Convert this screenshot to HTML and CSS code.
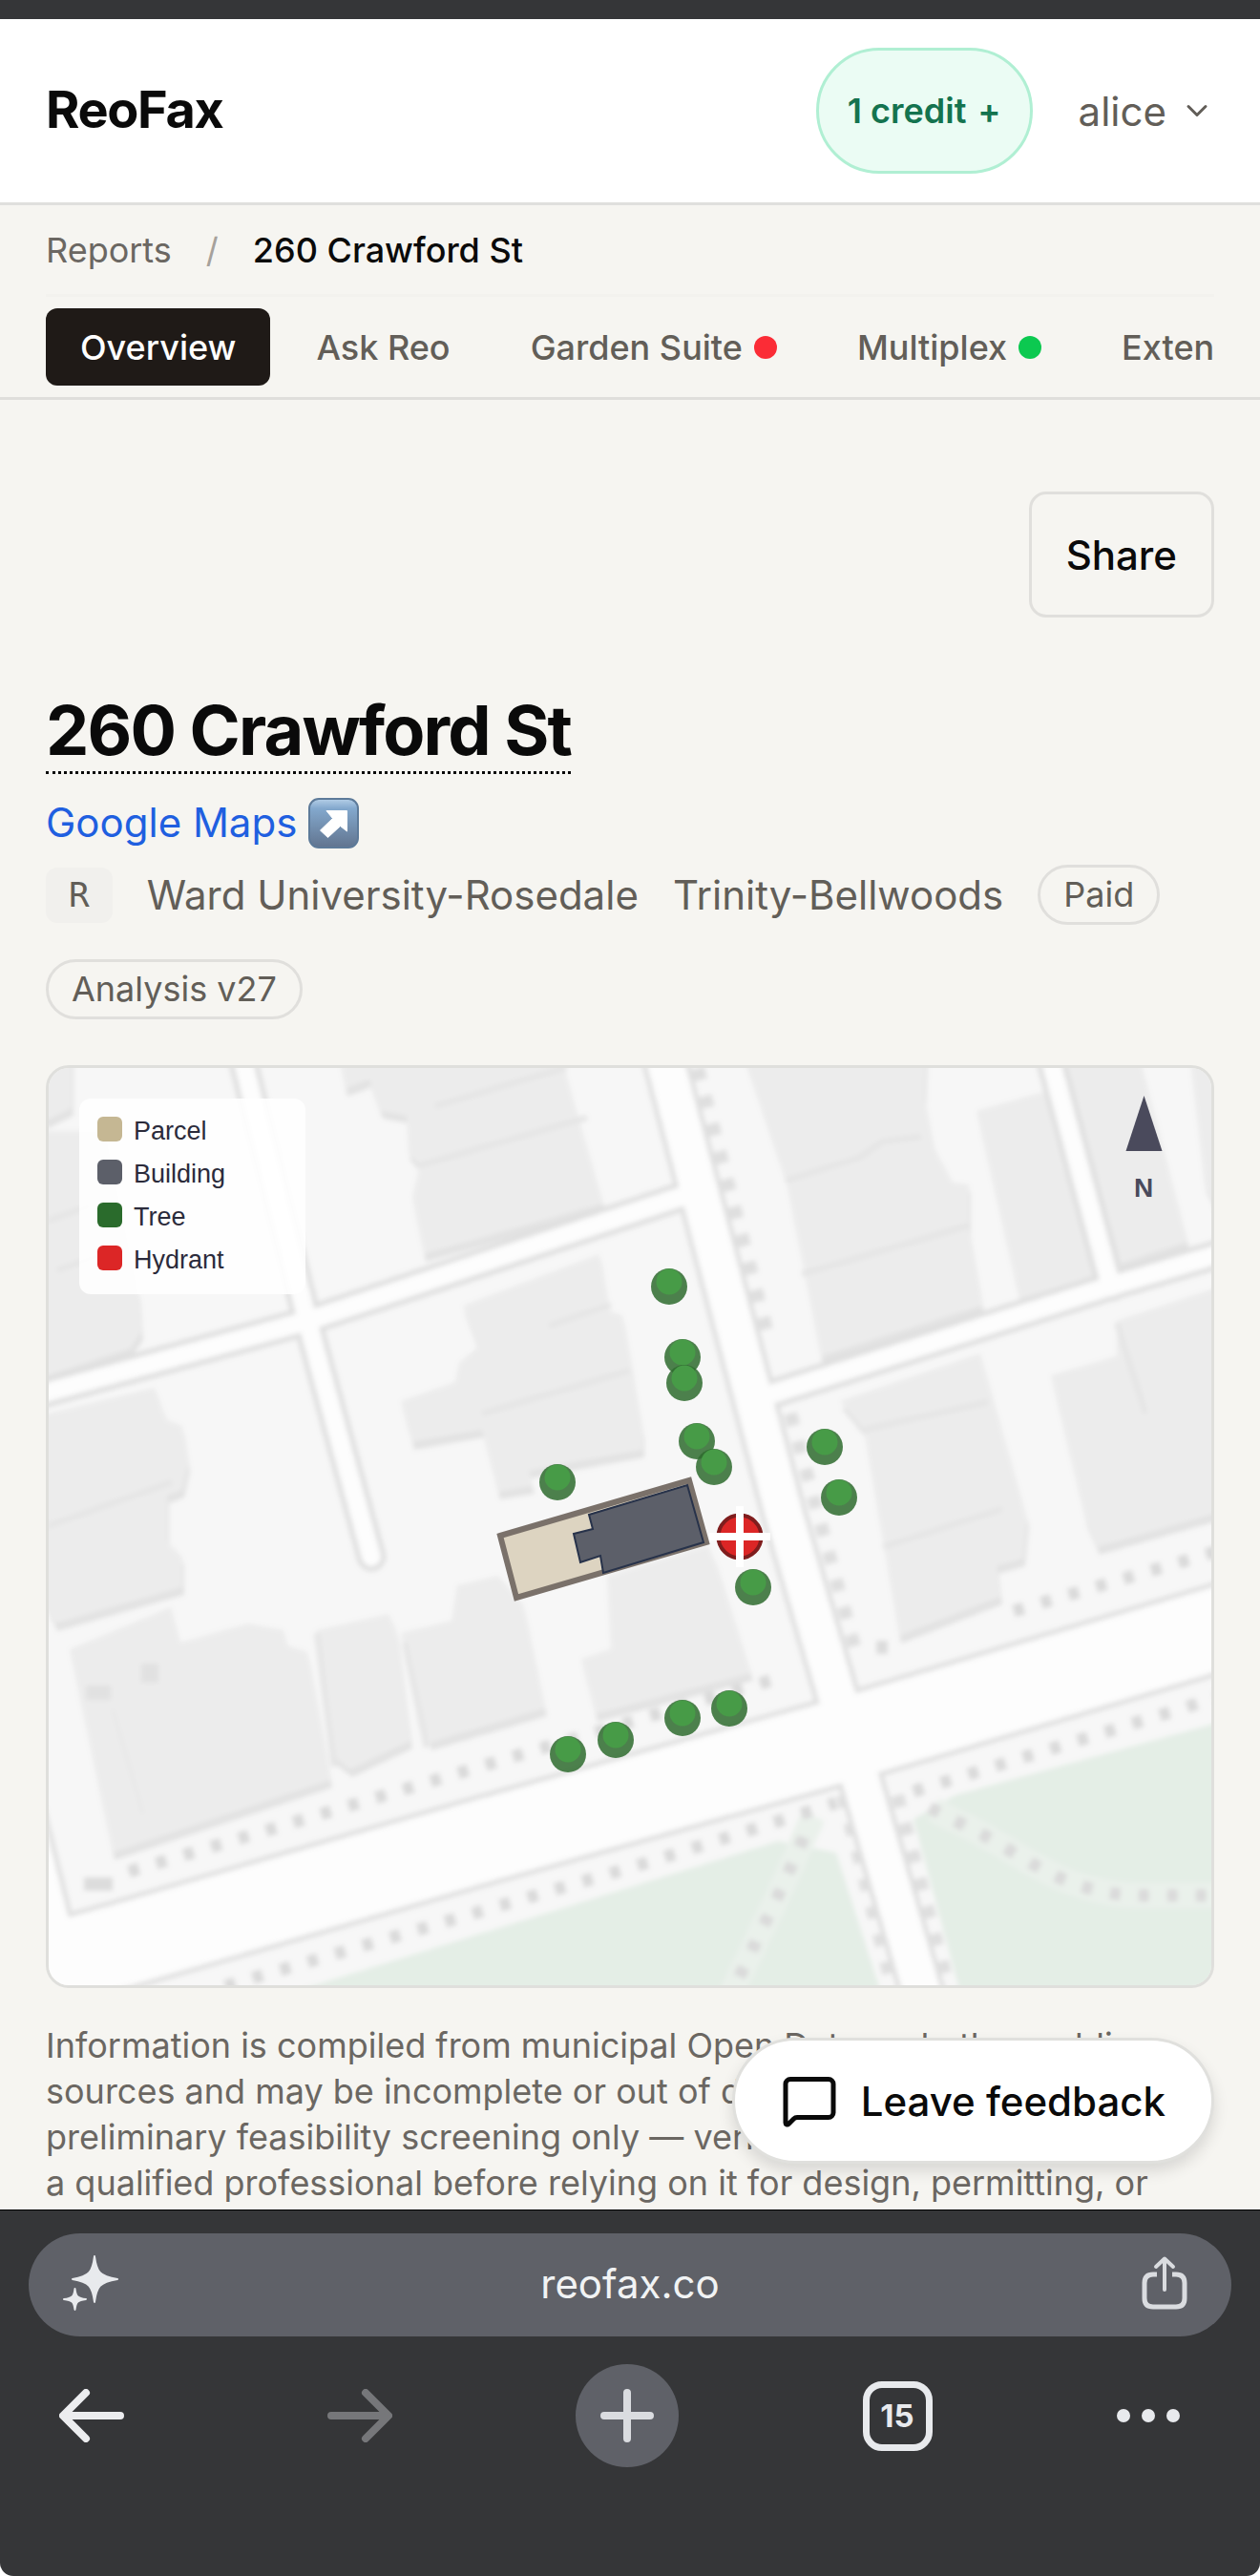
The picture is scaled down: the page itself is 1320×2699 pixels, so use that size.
FILE: index.html
```html
<!DOCTYPE html>
<html lang="en">
<head>
    <meta charset="UTF-8">
    <meta name="viewport" content="width=device-width, initial-scale=1.0">
    <title>260 Crawford St - ReoFax</title>
    <link rel="stylesheet" href="styles.css">
</head>
<body>
    <div class="status-strip"></div>

    <div class="page">
        <header class="site-header">
            <a href="#" class="logo">ReoFax</a>
            <div class="header-actions">
                <a href="#" class="credit-pill"><span>1 credit</span> <span>+</span></a>
                <button type="button" class="user-btn">
                    alice
                    <svg class="chevron" viewBox="0 0 24 24" fill="none" stroke="currentColor" stroke-width="2" stroke-linecap="round" stroke-linejoin="round"><path d="m6 9 6 6 6-6"/></svg>
                </button>
            </div>
        </header>

        <div class="subnav">
            <nav class="breadcrumb">
                <a href="#">Reports</a>
                <span class="slash">/</span>
                <span class="current">260 Crawford St</span>
            </nav>
            <nav class="tabs">
                <a href="#" class="tab active">Overview</a>
                <a href="#" class="tab">Ask Reo</a>
                <a href="#" class="tab">Garden Suite <span class="dot red"></span></a>
                <a href="#" class="tab">Multiplex <span class="dot green"></span></a>
                <a href="#" class="tab">Extension</a>
            </nav>
        </div>

        <main class="content">
            <div class="toolbar">
                <button type="button" class="share-btn">Share</button>
            </div>

            <h1><span>260 Crawford St</span></h1>

            <a href="#" class="maps-link">
                Google Maps
                <svg class="arrow-emoji" viewBox="0 0 53 53">
                    <defs>
                        <linearGradient id="tile" x1="0" y1="0" x2="0" y2="1">
                            <stop offset="0" stop-color="#b5cfe8"/>
                            <stop offset="0.2" stop-color="#83a8cd"/>
                            <stop offset="1" stop-color="#61748f"/>
                        </linearGradient>
                    </defs>
                    <rect x="1" y="1" width="51" height="51" rx="10" fill="url(#tile)" stroke="#5d7a99" stroke-width="2"/>
                    <path d="M19 13.500H40.500V35L33.500 29.500L20.500 41.500L12.500 34L25.500 21.500Z" fill="#fff" stroke="#fff" stroke-linejoin="round"/>
                </svg>
            </a>

            <div class="meta">
                <span class="zone">R</span>
                <span>Ward University-Rosedale</span>
                <span>Trinity-Bellwoods</span>
                <span class="pill">Paid</span>
                <span class="pill">Analysis v27</span>
            </div>

            <div class="map-card">
                <svg class="map" viewBox="51 1118 1218 961" role="img" aria-label="Site map">
                    <defs>
                        <filter id="soft" x="-5%" y="-5%" width="110%" height="110%"><feGaussianBlur stdDeviation="2.600"/></filter>
                        <g id="houses">
                            <path d="M354 1100H591V1118L632 1260L444 1313L432 1253L440 1220L428 1207L426 1168L399 1163L387 1130L362 1140Z"/>
                            <path d="M485 1367L628 1313L638 1373L652 1377L673 1500V1518L554 1540L558 1556L522 1562L505 1497L432 1510L420 1467L477 1447L481 1427L501 1410Z"/>
                            <path d="M30 1100H75V1160L51 1172H30Z"/>
                            <path d="M30 1184H110L145 1355L148 1395L136 1412L30 1447Z"/>
                            <path d="M30 1485L162 1453L175 1487L191 1493L197 1533L191 1560L175 1566L175 1615L191 1630V1662L58 1700L30 1640Z"/>
                            <path d="M73 1727L179 1683L189 1720L260 1700L297 1707L301 1723L322 1730L346 1864L118 1940Z"/>
                            <path d="M332 1707L407 1690L415 1707L430 1823L367 1853L350 1840Z"/>
                            <path d="M420 1710L473 1697L479 1660L522 1650L548 1680L571 1789L450 1825Z"/>
                            <path d="M636 1650L742 1618L754 1647L787 1752L624 1795L609 1737L640 1727Z"/>
                            <path d="M778 1100H970L968 1150L978 1200L998 1238L1015 1240V1287L1029 1367L860 1420L823 1233Z"/>
                            <path d="M1023 1163L1093 1143L1146 1340L1068 1360Z"/>
                            <path d="M1112 1100H1192L1244 1300L1174 1323Z"/>
                            <path d="M1246 1100H1290V1300L1262 1240Z"/>
                            <path d="M880 1467L1027 1417L1076 1590L1072 1632L1044 1640L1048 1672L942 1713L905 1497Z"/>
                            <path d="M1101 1440L1170 1420V1383L1290 1343V1580L1150 1620L1137 1590Z"/>
                        </g>
                        <g id="streets">
                            <path d="M-10 1475L52 1457L322 1383L713 1253"/>
                            <path d="M252 1100L322 1383L389 1630"/>
                            <path d="M807 1460L1162 1347L1290 1309"/>
                            <path d="M1098 1100L1164 1347"/>
                        </g>
                        <path id="crawford" d="M694 1100L822 1588L878 1780L902 1865L970 2100"/>
                        <path id="dundas" d="M-20 2078L128 2037L501 1929L880 1823L1290 1701"/>
                        <path id="side" d="M22 1900L62 2060"/>
                        <g id="tree">
                            <circle r="19" fill="#2e6b2e" fill-opacity=".85"/>
                            <circle cy="-5" r="13.500" fill="#479b47"/>
                        </g>
                    </defs>

                    <g filter="url(#soft)">
                        <path d="M0 1080H1320V2120H0Z" fill="#f7f7f7"/>

                        <!-- park -->
                        <path d="M310 2085L680 1970L815 1928L876 1940L921 2080V2110H310Z" fill="#e4eee6"/>
                        <path d="M957 1905L1000 1880L1290 1800V2110H1012Z" fill="#e4eee6"/>

                        <!-- houses and their shaded sides -->
                        <use href="#houses" x="2" y="8" fill="#e2e2e2"/>
                        <use href="#houses" fill="#ececec"/>
                        <g fill="none" stroke="#e5e5e5" stroke-width="6">
                            <path d="M456 1158L591 1118M440 1220L615 1170M575 1388L640 1366M505 1480L660 1435M50 1278L96 1262M60 1330L110 1312M50 1598L180 1552"/>
                            <path d="M823 1236L900 1212L925 1195L965 1190M840 1334L1015 1283M905 1497L1035 1468M925 1620L1050 1580M332 1710L350 1850M424 1720L447 1830M1170 1385L1200 1480"/>
                        </g>
                        <path d="M118 1790L150 1900" fill="none" stroke="#e9e9e9" stroke-width="5"/>
                        <path d="M90 1765H116V1780H90ZM148 1742H166V1762H148Z" fill="#e1e1e1"/>

                        <!-- footpaths -->
                        <g fill="none" stroke="#eaf1eb" stroke-width="26">
                            <path d="M978 1895L1031 1922L1082 1952Q1138 1985 1195 1985H1290"/>
                            <path d="M852 1902L819 1977L765 2090"/>
                        </g>
                        <g fill="none" stroke="#dadada" stroke-width="13" stroke-dasharray="11 19">
                            <path d="M135 1960L560 1833L813 1758"/>
                            <path d="M236 2080L680 1950L876 1888"/>
                            <path d="M1062 1687L1290 1620"/>
                            <path d="M957 1876L1290 1773"/>
                            <path d="M974 1893L1031 1922L1082 1952Q1138 1985 1195 1985H1290"/>
                            <path d="M842 1924L819 1977L765 2090"/>
                        </g>
                        <g fill="none" stroke="#dfdfdf" stroke-width="14" stroke-dasharray="13 17">
                            <path d="M731 1118L807 1407"/>
                            <path d="M828 1480L896 1727"/>
                            <path d="M940 1880L999 2100"/>
                            <path d="M883 1880L940 2100"/>
                        </g>
                        <path d="M88 1966H118V1980H88ZM918 1718H930V1732H918Z" fill="#dcdcdc"/>

                        <!-- road casings, then road fills -->
                        <g fill="none" stroke="#dfdfdf">
                            <use href="#streets" stroke-width="31" stroke-linecap="round"/>
                            <use href="#crawford" stroke-width="49"/>
                            <use href="#side" stroke-width="54"/>
                            <use href="#dundas" stroke-width="96"/>
                        </g>
                        <g fill="none" stroke="#fdfdfd">
                            <use href="#streets" stroke-width="20" stroke-linecap="round"/>
                            <use href="#crawford" stroke-width="39"/>
                            <use href="#side" stroke-width="44"/>
                            <use href="#dundas" stroke-width="86"/>
                        </g>
                    </g>

                    <!-- lot -->
                    <path d="M524 1608L722 1550L740 1615L541 1673Z" fill="#ddd4c1" stroke="#7a716a" stroke-width="6"/>
                    <path d="M617 1586L720 1555L737 1615L632 1647L629 1629L608 1636L601 1606L621 1601Z" fill="#5c5f69" stroke="#27324a" stroke-width="2"/>

                    <use href="#tree" x="701" y="1347"/>
                    <use href="#tree" x="715" y="1421"/>
                    <use href="#tree" x="717" y="1448"/>
                    <use href="#tree" x="730" y="1509"/>
                    <use href="#tree" x="748" y="1536"/>
                    <use href="#tree" x="864" y="1515"/>
                    <use href="#tree" x="879" y="1568"/>
                    <use href="#tree" x="584" y="1552"/>
                    <use href="#tree" x="789" y="1662"/>
                    <use href="#tree" x="715" y="1799"/>
                    <use href="#tree" x="764" y="1789"/>
                    <use href="#tree" x="645" y="1822"/>
                    <use href="#tree" x="595" y="1837"/>

                    <circle cx="775" cy="1609" r="22.500" fill="#dc2626" stroke="#7f1d1d" stroke-width="4"/>
                    <path d="M775 1577V1641M743 1609H807" stroke="#fff" stroke-width="8"/>

                    <!-- legend -->
                    <rect x="83" y="1150" width="237" height="205" rx="12" fill="#fff" fill-opacity=".88"/>
                    <g class="legend-text">
                        <rect x="102" y="1169" width="26" height="26" rx="6" fill="#c5b793"/>
                        <text x="140" y="1193">Parcel</text>
                        <rect x="102" y="1214" width="26" height="26" rx="6" fill="#5c5f69"/>
                        <text x="140" y="1238">Building</text>
                        <rect x="102" y="1259" width="26" height="26" rx="6" fill="#2a6b2c"/>
                        <text x="140" y="1283">Tree</text>
                        <rect x="102" y="1304" width="26" height="26" rx="6" fill="#dc2626"/>
                        <text x="140" y="1328">Hydrant</text>
                    </g>

                    <path d="M1198.500 1147L1217.500 1205H1179.500Z" fill="#4a4a5c"/>
                    <text class="north" x="1198" y="1253">N</text>
                </svg>
            </div>

            <p class="disclaimer">
                Information is compiled from municipal Open Data and other public<br>
                sources and may be incomplete or out of date. It is provided for<br>
                preliminary feasibility screening only — verify the details here with<br>
                a qualified professional before relying on it for design, permitting, or
            </p>
        </main>

        <button type="button" class="feedback-btn">
            <svg viewBox="0 0 24 24" fill="none" stroke="currentColor" stroke-width="2" stroke-linecap="round" stroke-linejoin="round"><path d="M22 17a2 2 0 0 1-2 2H6.828a2 2 0 0 0-1.414.586l-2.202 2.202A.71.71 0 0 1 2 21.286V5a2 2 0 0 1 2-2h16a2 2 0 0 1 2 2z"/></svg>
            Leave feedback
        </button>
    </div>

    <footer class="browser-bar">
        <div class="omnibox">
            <svg class="spark" viewBox="0 0 58 58" fill="#e8eaed" stroke="#e8eaed" stroke-width="2" stroke-linejoin="round">
                <path d="M33 1C35 17 38 22 57 25C38 28 35 33 33 49C31 33 28 28 10 25C28 22 31 17 33 1Z"/>
                <path d="M12.500 35C13.500 43 15 45 24 46C15 47 13.500 49 12.500 57C11.500 49 10 47 1 46C10 45 11.500 43 12.500 35Z"/>
            </svg>
            <span>reofax.co</span>
            <svg class="share" viewBox="0 0 48 58" fill="none" stroke="#dadce0" stroke-width="5">
                <path d="M16 20H12Q3 20 3 29V45Q3 54 12 54H36Q45 54 45 45V29Q45 20 36 20H32"/>
                <path d="M24 36V4M15 12L24 3.500L33 12" stroke-width="4" stroke-linecap="round" stroke-linejoin="round"/>
            </svg>
        </div>
        <div class="browser-nav">
            <button type="button" class="back" aria-label="Back">
                <svg viewBox="0 0 68 56" fill="none" stroke="#ecedef" stroke-width="8" stroke-linecap="round" stroke-linejoin="round"><path d="M64 28H5M28 4L4 28L28 52"/></svg>
            </button>
            <button type="button" aria-label="Forward">
                <svg viewBox="0 0 68 56" fill="none" stroke="#76777a" stroke-width="8" stroke-linecap="round" stroke-linejoin="round"><path d="M4 28H63M40 4L64 28L40 52"/></svg>
            </button>
            <button type="button" class="new-tab" aria-label="New tab">
                <svg class="plus" viewBox="0 0 56 56" stroke="#dadce0" stroke-width="8" stroke-linecap="round"><path d="M28 4V52M4 28H52"/></svg>
            </button>
            <button type="button" class="tab-count">15</button>
            <button type="button" aria-label="More">
                <svg viewBox="0 0 68 56" fill="#e8eaed"><circle cx="8" cy="28" r="7"/><circle cx="34" cy="28" r="7"/><circle cx="60" cy="28" r="7"/></svg>
            </button>
        </div>
    </footer>
</body>
</html>
```
FILE: styles.css
```css
* {
    box-sizing: border-box;
}

body {
    margin: 0;
    min-height: 100vh;
    display: flex;
    flex-direction: column;
    font-family: Inter, "Liberation Sans", sans-serif;
    background-color: #fff;
    color: #0a0a0a;
}

a {
    color: inherit;
    text-decoration: none;
}

button {
    font-family: inherit;
    color: inherit;
    cursor: pointer;
    padding: 0;
    border: none;
    background: none;
}

.status-strip {
    height: 20px;
    background-color: #353638;
}

.page {
    position: relative;
    flex: 1;
    overflow: hidden;
    background-color: #f6f5f1;
}

/* Header */
.site-header {
    display: flex;
    align-items: center;
    justify-content: space-between;
    padding: 30px 48px;
    background-color: #fff;
    border-bottom: 3px solid #dfdfdd;
}

.logo {
    padding-bottom: 4px;
    font-size: 54px;
    font-weight: 700;
    letter-spacing: -0.025em;
}

.header-actions {
    display: flex;
    align-items: center;
    gap: 48px;
}

.credit-pill {
    display: flex;
    align-items: center;
    gap: 12px;
    height: 132px;
    padding: 0 30px;
    border: 3px solid #b0efd3;
    border-radius: 66px;
    background-color: #ebfcf4;
    color: #14734f;
    font-size: 36px;
    font-weight: 600;
}

.user-btn {
    display: flex;
    align-items: center;
    gap: 14px;
    font-size: 42px;
    color: #625e58;
}

.chevron {
    width: 36px;
    height: 36px;
}

/* Breadcrumb and tabs */
.subnav {
    padding: 0 48px;
    border-bottom: 3px solid #dfdedb;
    font-size: 36px;
}

.breadcrumb {
    display: flex;
    align-items: center;
    gap: 36px;
    height: 96px;
    color: #6b6762;
    border-bottom: 3px solid #f3f2ee;
}

.breadcrumb .slash {
    color: #a6a19b;
}

.breadcrumb .current {
    color: #0a0a0a;
    font-weight: 500;
}

.tabs {
    display: flex;
    gap: 12px;
    padding: 12px 0;
    overflow: hidden;
}

.tab {
    display: flex;
    align-items: center;
    gap: 12px;
    flex-shrink: 0;
    height: 81px;
    padding: 0 36px;
    border-radius: 12px;
    color: #625e58;
    font-weight: 500;
}

.tab.active {
    background-color: #1f1a17;
    color: #fff;
}

.dot {
    width: 24px;
    height: 24px;
    border-radius: 50%;
}

.dot.red {
    background-color: #fb2c36;
}

.dot.green {
    background-color: #0cc950;
}

/* Report */
.content {
    padding: 96px 48px 0;
}

.toolbar {
    display: flex;
    justify-content: flex-end;
    margin-bottom: 73px;
}

.share-btn {
    height: 132px;
    padding: 0 36px;
    border: 3px solid #e0dfdc;
    border-radius: 18px;
    font-size: 42px;
    font-weight: 500;
}

h1 {
    margin: 0 0 22px;
    font-size: 72px;
    line-height: 90px;
    font-weight: 700;
    letter-spacing: -0.025em;
}

h1 span {
    border-bottom: 3px dotted #0a0a0a;
}

.maps-link {
    display: flex;
    align-items: center;
    gap: 12px;
    margin-bottom: 14px;
    font-size: 42px;
    line-height: 60px;
    color: #1f5fe0;
}

.arrow-emoji {
    width: 53px;
    height: 53px;
}

.meta {
    display: flex;
    flex-wrap: wrap;
    align-items: center;
    gap: 36px;
    margin-bottom: 48px;
    font-size: 42px;
    color: #625e58;
}

.zone {
    padding: 5px 24px;
    border-radius: 12px;
    background-color: #f1f0ed;
    font-family: "DejaVu Sans Mono", monospace;
    font-size: 36px;
    line-height: 48px;
}

.pill {
    padding: 0 24px;
    border: 3px solid #e0dfdc;
    border-radius: 32px;
    font-size: 36px;
    line-height: 57px;
}

/* Map */
.map-card {
    border: 3px solid #dfdfdc;
    border-radius: 24px;
    overflow: hidden;
    margin-bottom: 36px;
}

.map {
    display: block;
    width: 100%;
}

.legend-text {
    font-family: "Liberation Sans", Arial, sans-serif;
    font-size: 27px;
    fill: #2b2b3b;
}

.north {
    font-family: "Liberation Sans", Arial, sans-serif;
    font-size: 28px;
    font-weight: 700;
    text-anchor: middle;
    fill: #4a4a5c;
}

.disclaimer {
    margin: 0;
    font-size: 36px;
    line-height: 48px;
    color: #6b6762;
    white-space: nowrap;
}

.feedback-btn {
    position: absolute;
    right: 48px;
    bottom: 48px;
    display: flex;
    align-items: center;
    gap: 24px;
    height: 132px;
    padding: 0 48px;
    border: 3px solid #e0e0dd;
    border-radius: 66px;
    background-color: #fff;
    box-shadow: 0 8px 16px rgba(0, 0, 0, 0.12);
    font-size: 42px;
    font-weight: 500;
}

.feedback-btn svg {
    width: 60px;
    height: 60px;
}

/* Browser controls */
.browser-bar {
    padding: 24px 30px 114px;
    border-top: 1px solid #000;
    border-radius: 0 0 14px 14px;
    background-color: #353638;
}

.omnibox {
    display: flex;
    align-items: center;
    justify-content: space-between;
    height: 108px;
    padding: 0 46px 4px 36px;
    border-radius: 54px;
    background-color: #5f6168;
    color: #f1f3f4;
    font-size: 42px;
}

.spark {
    width: 58px;
    height: 58px;
}

.share {
    width: 48px;
    height: 58px;
}

.browser-nav {
    display: flex;
    align-items: center;
    justify-content: space-between;
    margin-top: 29px;
    padding: 0 53px 0 32px;
}

.browser-nav svg {
    display: block;
    width: 68px;
    height: 56px;
}

.browser-nav .back {
    padding-right: 20px;
}

.new-tab {
    display: flex;
    align-items: center;
    justify-content: center;
    width: 108px;
    height: 108px;
    border-radius: 50%;
    background-color: #5f6168;
}

.browser-nav .plus {
    width: 56px;
}

.tab-count {
    width: 73px;
    height: 73px;
    border: 7px solid #e8eaed;
    border-radius: 20px;
    color: #e8eaed;
    font-size: 33px;
    font-weight: 700;
}
```
